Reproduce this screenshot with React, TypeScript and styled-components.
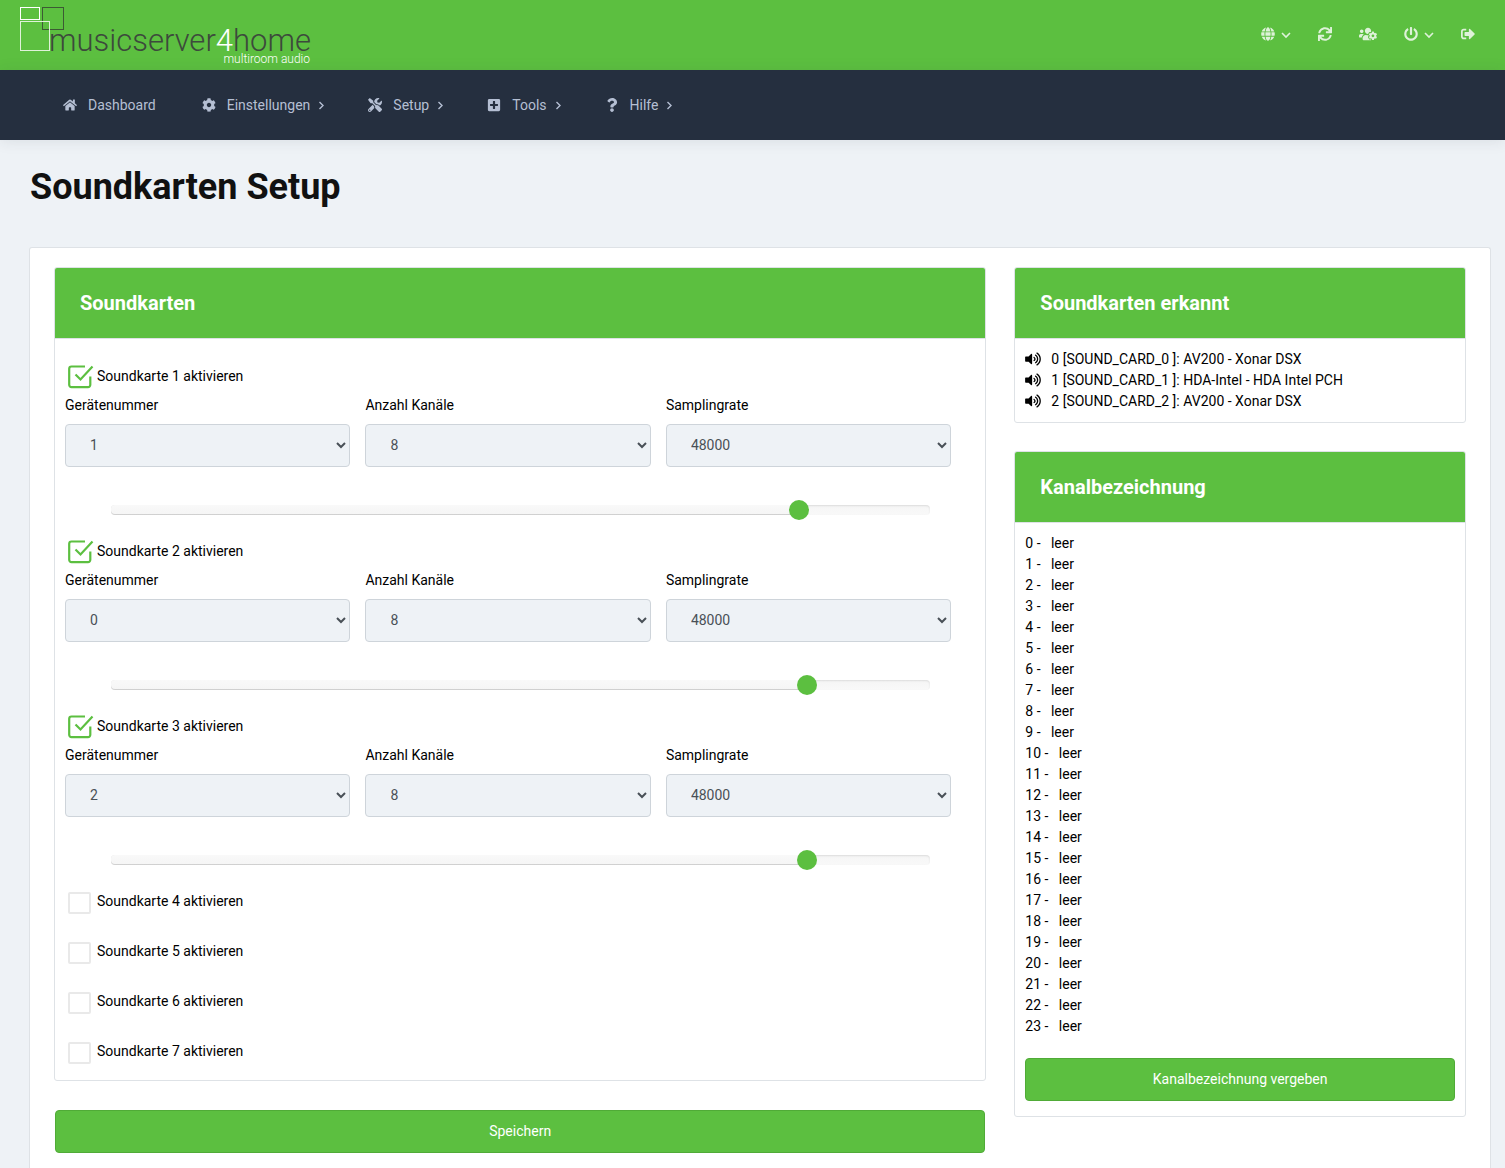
import React, { useState } from "react";
import styled, { createGlobalStyle } from "styled-components";
import {
  FaGlobe,
  FaSync,
  FaUsersCog,
  FaPowerOff,
  FaSignOutAlt,
  FaHome,
  FaCog,
  FaTools,
  FaPlusSquare,
  FaQuestion,
  FaVolumeUp,
} from "react-icons/fa";

const green = "#5cbf40";
const line = "#dee2e6";

const GlobalStyle = createGlobalStyle`
  *, *::before, *::after { box-sizing: border-box; }
  body {
    margin: 0;
    background: #eef2f6;
    color: #000;
    font: 14px/21px Roboto, "Liberation Sans", sans-serif;
  }
`;

const Page = styled.div`
  min-height: 100vh;
  display: flex;
  flex-direction: column;
`;

const TopBar = styled.header`
  height: 70px;
  padding: 0 30px 0 20px;
  background: ${green};
  display: flex;
  justify-content: space-between;
`;

const HomeLink = styled.a`
  display: block;
  height: 70px;
`;

const Actions = styled.div`
  display: flex;
  align-items: center;
  gap: 27px;
  height: 68px;
`;

const IconButton = styled.button`
  display: flex;
  align-items: center;
  gap: 6px;
  padding: 0;
  border: 0;
  background: none;
  color: rgba(255, 255, 255, 0.8);
  font-size: 14px;
  cursor: pointer;
`;

const NavBar = styled.nav`
  height: 70px;
  padding: 0 61px;
  background: #252f3f;
  box-shadow: 0 1px 14px rgba(38, 46, 62, 0.1);
  display: flex;
  align-items: center;
  gap: 44px;
`;

const NavLink = styled.a`
  display: flex;
  align-items: center;
  color: #b5bfd3;
  text-decoration: none;
`;

const NavIcon = styled.span`
  display: flex;
  justify-content: center;
  width: 18px;
  margin-right: 9px;
  svg {
    width: auto;
    height: 14px;
  }
`;

const NavChevron = styled.svg`
  width: 5px;
  height: 9px;
  margin: 0 -2px 0 9px;
`;

const Main = styled.main`
  flex: 1;
  display: flex;
  flex-direction: column;
  padding: 0 14px 0 29px;
`;

const Title = styled.h1`
  margin: 25px 1px 38px;
  font-size: 36px;
  line-height: 44px;
  font-weight: 700;
  color: #111;
`;

const Card = styled.section`
  flex: 1;
  padding: 19px 24px 15px;
  background: #fff;
  border: 1px solid ${line};
  border-bottom: 0;
  border-radius: 3px 3px 0 0;
  display: grid;
  grid-template-columns: calc(66.667% - 9px) 1fr;
  column-gap: 28px;
  align-items: start;
`;

const Column = styled.div`
  display: flex;
  flex-direction: column;
  gap: 28px;
`;

const Panel = styled.section`
  border: 1px solid ${line};
  border-radius: 3px;
  background: #fff;
`;

const PanelHeader = styled.header`
  height: 71px;
  padding: 0 25px;
  background: ${green};
  border-bottom: 1px solid ${line};
  border-radius: 2px 2px 0 0;
  display: flex;
  align-items: center;
`;

const PanelTitle = styled.h2`
  margin: 0;
  color: #fff;
  font-size: 20px;
  line-height: 30px;
  font-weight: 700;
`;

const CardList = styled.div`
  padding: 23px 10px 15px;
  display: flex;
  flex-direction: column;
  gap: 22px;
`;

const Toggle = styled.label`
  display: flex;
  align-items: center;
  gap: 3px;
  width: fit-content;
  height: 28px;
  padding-left: 3px;
`;

const CheckCell = styled.span`
  display: grid;
  width: 26px;
  height: 26px;
  > * {
    grid-area: 1 / 1;
  }
`;

const CheckBox = styled.input`
  appearance: none;
  align-self: end;
  width: 23px;
  height: 22px;
  margin: 0;
  border: 2px solid #e9e9e9;
  border-radius: 2px;
  background: #fff;
  &:checked {
    border-color: transparent;
  }
`;

const CheckMark = styled.svg`
  pointer-events: none;
`;

const Fields = styled.div`
  display: grid;
  grid-template-columns: repeat(3, 1fr);
  gap: 15px;
  padding-right: 24px;
  margin-top: 5px;
`;

const Field = styled.label`
  display: flex;
  flex-direction: column;
  gap: 8px;
`;

const Select = styled.select`
  width: 100%;
  height: 43px;
  padding: 0 0 1px 20px;
  border: 1px solid #ced4da;
  border-radius: 4px;
  background-color: #eef2f6;
  color: #495057;
  font: inherit;
`;

const Rail = styled.div`
  display: grid;
  width: 90%;
  height: 10px;
  margin: 38px auto 0;
  border-radius: 4px;
  background: linear-gradient(#f5f5f5, #f9f9f9);
  box-shadow: inset 0 1px 2px rgba(0, 0, 0, 0.1);
  > * {
    grid-area: 1 / 1;
  }
`;

const RailFill = styled.div`
  height: 10px;
  border-radius: 4px;
  background: linear-gradient(#f9f9f9, #f5f5f5);
  box-shadow: inset 0 -1px 0 rgba(0, 0, 0, 0.15);
`;

const Range = styled.input`
  appearance: none;
  align-self: center;
  width: calc(100% + 20px);
  height: 20px;
  margin: -5px -10px;
  background: none;
  &::-webkit-slider-thumb {
    appearance: none;
    width: 20px;
    height: 20px;
    border-radius: 50%;
    background: ${green};
  }
`;

const Button = styled.button`
  height: 43px;
  border: 1px solid #50ab37;
  border-radius: 4px;
  background: ${green};
  color: #fff;
  font: inherit;
  cursor: pointer;
`;

const SaveButton = styled(Button)`
  margin: 1px 1px 0;
`;

const ListBody = styled.div<{ $bottom: number }>`
  padding: 10px 10px ${(p) => p.$bottom}px;
  display: flex;
  flex-direction: column;
  gap: 21px;
`;

const List = styled.ul`
  margin: 0;
  padding: 0;
  list-style: none;
`;

const Item = styled.li`
  display: flex;
  align-items: center;
  gap: 10px;
  white-space: pre;
  svg {
    width: 16px;
    height: 14px;
    margin-bottom: 2px;
  }
`;

const LogoName = styled.text`
  font: 300 31px Roboto, sans-serif;
  fill: #3c4a3c;
`;

const LogoTag = styled.text`
  font: 300 12px Roboto, sans-serif;
  fill: #fff;
`;

function Logo() {
  return (
    <svg width="300" height="70" viewBox="0 0 300 70" role="img" aria-label="musicserver4home">
      <g fill="none">
        <rect x="22.5" y="7.5" width="21" height="22" stroke="#3c5a34" />
        <rect x="0.5" y="7.5" width="19" height="12" stroke="#fff" />
        <rect x="0.5" y="21.5" width="29" height="29" stroke="#dff2d9" />
      </g>
      <LogoName x="29" y="51">
        musicserver<tspan fill="#fff">4</tspan>home
      </LogoName>
      <LogoTag x="290" y="63" textAnchor="end">
        multiroom audio
      </LogoTag>
    </svg>
  );
}

function Caret() {
  return (
    <svg width="10" height="10" viewBox="0 0 10 10" fill="none" stroke="currentColor" strokeWidth="1.6">
      <path d="M1 4l4 4 4-4" />
    </svg>
  );
}

const navigation = [
  { label: "Dashboard", icon: <FaHome />, sub: false },
  { label: "Einstellungen", icon: <FaCog />, sub: true },
  { label: "Setup", icon: <FaTools />, sub: true },
  { label: "Tools", icon: <FaPlusSquare />, sub: true },
  { label: "Hilfe", icon: <FaQuestion />, sub: true },
];

const actions = [
  { label: "Sprache", icon: <FaGlobe />, menu: true },
  { label: "Neu laden", icon: <FaSync />, menu: false },
  { label: "Benutzer", icon: <FaUsersCog size={18} />, menu: false },
  { label: "Ausschalten", icon: <FaPowerOff />, menu: true },
  { label: "Abmelden", icon: <FaSignOutAlt />, menu: false },
];

const soundCards = [
  { id: 1, active: true, device: "1", volume: 84 },
  { id: 2, active: true, device: "0", volume: 85 },
  { id: 3, active: true, device: "2", volume: 85 },
  { id: 4, active: false, device: "3", volume: 85 },
  { id: 5, active: false, device: "4", volume: 85 },
  { id: 6, active: false, device: "5", volume: 85 },
  { id: 7, active: false, device: "6", volume: 85 },
];

const detected = [
  "0 [SOUND_CARD_0 ]: AV200 - Xonar DSX",
  "1 [SOUND_CARD_1 ]: HDA-Intel - HDA Intel PCH",
  "2 [SOUND_CARD_2 ]: AV200 - Xonar DSX",
];

const channels = Array.from({ length: 24 }, (_, i) => `${i} -   leer`);

type CardProps = { id: number; active: boolean; device: string; volume: number };

function SoundCard({ id, active, device, volume }: CardProps) {
  const [on, setOn] = useState(active);
  const [level, setLevel] = useState(volume);
  return (
    <div>
      <Toggle>
        <CheckCell>
          <CheckBox type="checkbox" checked={on} onChange={(e) => setOn(e.target.checked)} />
          {on && (
            <CheckMark width="26" height="26" viewBox="0 0 26 26" fill="none" stroke={green} strokeWidth="2.2">
              <path d="M17 3.5H3.500a2.300 2.300 0 0 0-2.300 2.300v16a2.300 2.300 0 0 0 2.300 2.300h16.500a2.300 2.300 0 0 0 2.300-2.300V13.500" />
              <path d="M7.500 11.500l5 5L24.500 3.500" />
            </CheckMark>
          )}
        </CheckCell>
        Soundkarte {id} aktivieren
      </Toggle>
      {on && (
        <>
          <Fields>
            <Field>
              Gerätenummer
              <Select defaultValue={device}>
                {["0", "1", "2", "3", "4", "5", "6"].map((n) => (
                  <option key={n}>{n}</option>
                ))}
              </Select>
            </Field>
            <Field>
              Anzahl Kanäle
              <Select defaultValue="8">
                <option>2</option>
                <option>6</option>
                <option>8</option>
              </Select>
            </Field>
            <Field>
              Samplingrate
              <Select defaultValue="48000">
                <option>44100</option>
                <option>48000</option>
                <option>96000</option>
              </Select>
            </Field>
          </Fields>
          <Rail>
            <RailFill style={{ width: `${level}%` }} />
            <Range
              type="range"
              min={0}
              max={100}
              value={level}
              aria-label={`Lautstärke Soundkarte ${id}`}
              onChange={(e) => setLevel(Number(e.target.value))}
            />
          </Rail>
        </>
      )}
    </div>
  );
}

export default function App() {
  return (
    <Page>
      <GlobalStyle />
      <TopBar>
        <HomeLink href="#">
          <Logo />
        </HomeLink>
        <Actions>
          {actions.map((a) => (
            <IconButton key={a.label} type="button" aria-label={a.label}>
              {a.icon}
              {a.menu && <Caret />}
            </IconButton>
          ))}
        </Actions>
      </TopBar>
      <NavBar>
        {navigation.map((n) => (
          <NavLink key={n.label} href="#">
            <NavIcon>{n.icon}</NavIcon>
            {n.label}
            {n.sub && (
              <NavChevron viewBox="0 0 5 9" fill="none" stroke="currentColor" strokeWidth="1.4">
                <path d="M0.500 1l3.500 3.500L0.500 8" />
              </NavChevron>
            )}
          </NavLink>
        ))}
      </NavBar>
      <Main>
        <Title>Soundkarten Setup</Title>
        <Card>
          <Column>
            <Panel>
              <PanelHeader>
                <PanelTitle>Soundkarten</PanelTitle>
              </PanelHeader>
              <CardList>
                {soundCards.map((c) => (
                  <SoundCard key={c.id} {...c} />
                ))}
              </CardList>
            </Panel>
            <SaveButton type="submit">Speichern</SaveButton>
          </Column>
          <Column>
            <Panel>
              <PanelHeader>
                <PanelTitle>Soundkarten erkannt</PanelTitle>
              </PanelHeader>
              <ListBody $bottom={10}>
                <List>
                  {detected.map((d) => (
                    <Item key={d}>
                      <FaVolumeUp />
                      {d}
                    </Item>
                  ))}
                </List>
              </ListBody>
            </Panel>
            <Panel>
              <PanelHeader>
                <PanelTitle>Kanalbezeichnung</PanelTitle>
              </PanelHeader>
              <ListBody $bottom={15}>
                <List>
                  {channels.map((c) => (
                    <Item key={c}>{c}</Item>
                  ))}
                </List>
                <Button type="button">Kanalbezeichnung vergeben</Button>
              </ListBody>
            </Panel>
          </Column>
        </Card>
      </Main>
    </Page>
  );
}
